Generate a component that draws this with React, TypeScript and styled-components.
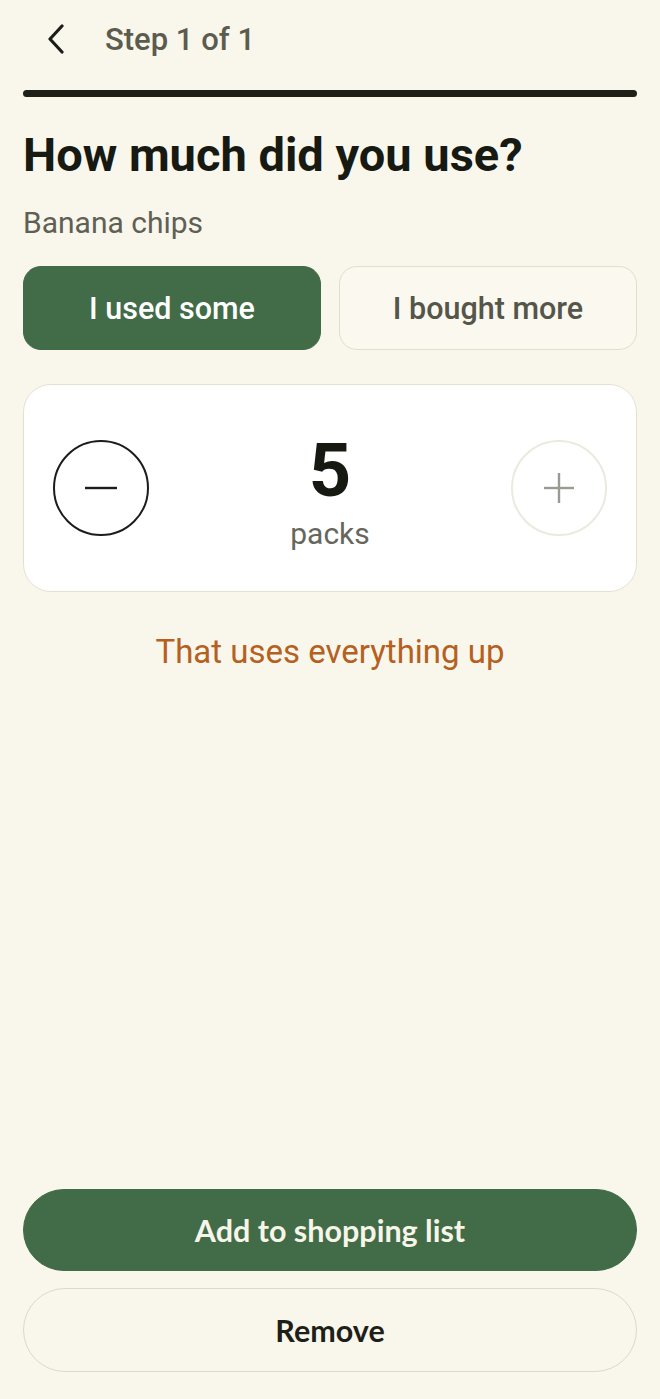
import React from "react";
import styled, { createGlobalStyle } from "styled-components";

const Global = createGlobalStyle`
  html, body { margin: 0; padding: 0; background: #f9f7ec; }
  body { font-family: Roboto, "Noto Sans", sans-serif; }
  * { box-sizing: border-box; }
`;

const Page = styled.div`
  width: 660px;
  height: 1399px;
  background: #f9f7ec;
  padding: 0 23px;
  display: flex;
  flex-direction: column;
`;

const Header = styled.header`
  height: 78px;
  display: flex;
  align-items: center;
  gap: 38px;
  padding-left: 24px;
`;

const BackButton = styled.button`
  border: 0;
  background: none;
  padding: 0;
  width: 20px;
  height: 30px;
  display: flex;
  align-items: center;
  justify-content: center;
  cursor: pointer;
`;

const StepLabel = styled.span`
  font-family: Roboto, sans-serif;
  font-weight: 500;
  font-size: 31px;
  color: #5c5c4e;
`;

const Progress = styled.div`
  height: 7px;
  border-radius: 4px;
  background: #1f2119;
  margin-top: 12px;
`;

const Title = styled.h1`
  margin: 30px 0 0;
  font-family: Roboto, sans-serif;
  font-weight: 700;
  font-size: 47px;
  line-height: 56px;
  color: #171a12;
`;

const Subtitle = styled.p`
  margin: 20px 0 0;
  font-family: Roboto, sans-serif;
  font-size: 30px;
  line-height: 40px;
  color: #5f5f55;
`;

const ToggleRow = styled.div`
  display: grid;
  grid-template-columns: 1fr 1fr;
  gap: 18px;
  margin-top: 23px;
`;

const ToggleButton = styled.button<{ $active?: boolean }>`
  height: 84px;
  border-radius: 18px;
  font-family: Roboto, sans-serif;
  font-weight: 500;
  font-size: 30.5px;
  border: 1.5px solid ${(p) => (p.$active ? "#426b48" : "#e2ddcc")};
  background: ${(p) => (p.$active ? "#426b48" : "#faf8ef")};
  color: ${(p) => (p.$active ? "#ffffff" : "#55554a")};
`;

const Card = styled.div`
  margin-top: 34px;
  height: 208px;
  background: #ffffff;
  border: 1.5px solid #e5e1d1;
  border-radius: 28px;
  display: flex;
  align-items: center;
  justify-content: space-between;
  padding: 0 29px;
`;

const RoundButton = styled.button<{ $muted?: boolean }>`
  width: 96px;
  height: 96px;
  border-radius: 50%;
  background: #ffffff;
  border: 2px solid ${(p) => (p.$muted ? "#ece9e0" : "#1c1c1a")};
  display: flex;
  align-items: center;
  justify-content: center;
  padding: 0;
`;

const Counter = styled.div`
  display: flex;
  flex-direction: column;
  align-items: center;
  margin-top: 8px;
`;

const Count = styled.div`
  font-family: Roboto, sans-serif;
  font-weight: 700;
  font-size: 74px;
  line-height: 78px;
  color: #161812;
`;

const Unit = styled.div`
  font-family: Roboto, sans-serif;
  font-size: 30px;
  line-height: 36px;
  color: #66665c;
  margin-top: 6px;
`;

const Note = styled.p`
  margin: 40px 0 0;
  text-align: center;
  font-family: Roboto, sans-serif;
  font-size: 33px;
  line-height: 40px;
  color: #b5601e;
`;

const Spacer = styled.div`
  flex: 1;
`;

const Actions = styled.div`
  display: flex;
  flex-direction: column;
  gap: 17px;
  padding-bottom: 27px;
`;

const PillButton = styled.button<{ $primary?: boolean }>`
  height: ${(p) => (p.$primary ? "82px" : "84px")};
  border-radius: 42px;
  font-family: Lato, "Open Sans", sans-serif;
  font-weight: 700;
  font-size: 30.5px;
  border: 1.5px solid ${(p) => (p.$primary ? "#426b48" : "#ddd8c8")};
  background: ${(p) => (p.$primary ? "#426b48" : "transparent")};
  color: ${(p) => (p.$primary ? "#f7f5e8" : "#1e1f18")};
`;

export default function App() {
  return (
    <>
      <Global />
      <Page>
        <Header>
          <BackButton aria-label="Back">
            <svg width="20" height="30" viewBox="0 0 20 30" fill="none">
              <path d="M15 2 L3 15 L15 28" stroke="#1c1c18" strokeWidth="3.2" strokeLinecap="round" strokeLinejoin="round" />
            </svg>
          </BackButton>
          <StepLabel>Step 1 of 1</StepLabel>
        </Header>
        <Progress />
        <Title>How much did you use?</Title>
        <Subtitle>Banana chips</Subtitle>
        <ToggleRow>
          <ToggleButton $active>I used some</ToggleButton>
          <ToggleButton>I bought more</ToggleButton>
        </ToggleRow>
        <Card>
          <RoundButton aria-label="Decrease">
            <svg width="34" height="4" viewBox="0 0 34 4">
              <line x1="1" y1="2" x2="33" y2="2" stroke="#1c1c1a" strokeWidth="2.4" />
            </svg>
          </RoundButton>
          <Counter>
            <Count>5</Count>
            <Unit>packs</Unit>
          </Counter>
          <RoundButton $muted aria-label="Increase">
            <svg width="32" height="32" viewBox="0 0 32 32">
              <line x1="1" y1="16" x2="31" y2="16" stroke="#9a9a94" strokeWidth="2.4" />
              <line x1="16" y1="1" x2="16" y2="31" stroke="#9a9a94" strokeWidth="2.4" />
            </svg>
          </RoundButton>
        </Card>
        <Note>That uses everything up</Note>
        <Spacer />
        <Actions>
          <PillButton $primary>Add to shopping list</PillButton>
          <PillButton>Remove</PillButton>
        </Actions>
      </Page>
    </>
  );
}
